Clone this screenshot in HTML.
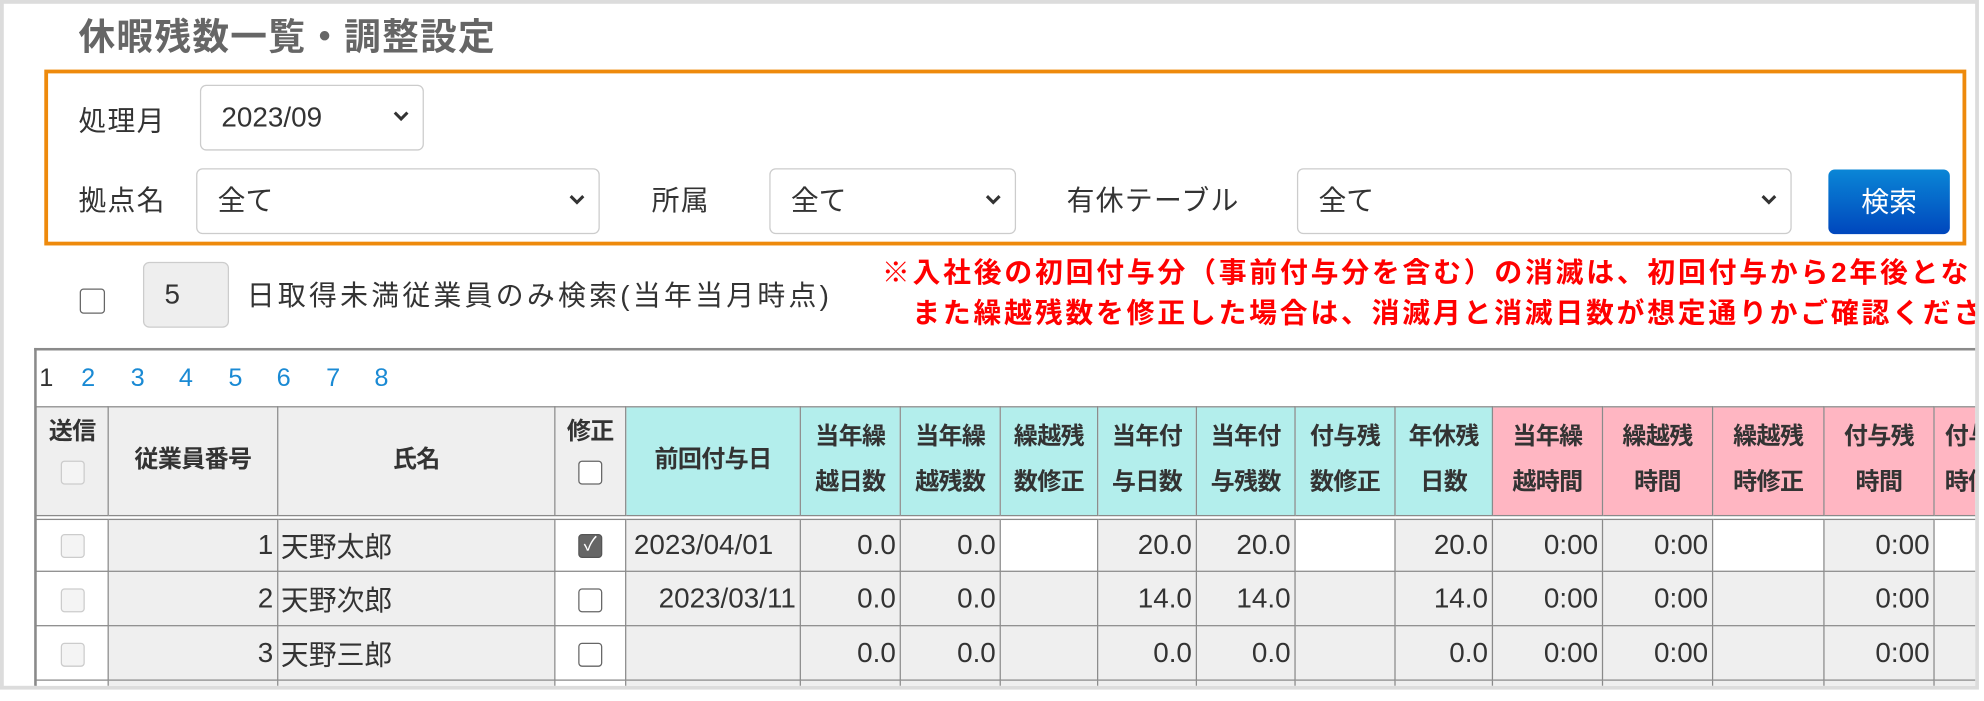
<!DOCTYPE html>
<html><head><meta charset="utf-8"><style>
*{box-sizing:border-box;margin:0;padding:0}
body{width:1984px;height:701px;overflow:hidden;background:#fff;font-family:"Liberation Sans","Noto Sans CJK JP",sans-serif;color:#333}
#w{position:absolute;left:0;top:0;width:1568px;height:554px;transform:scale(1.26531);transform-origin:0 0}
.a{position:absolute}
#frame{left:0;top:0;width:1564px;height:545px;border:3px solid #dcdcdc;overflow:hidden;background:#fff}
.lbl{font-size:22px;color:#333;line-height:26px;letter-spacing:1px}
.sel{border:1px solid #ccc;border-radius:5px;background:#fff;font-size:22px;line-height:49px;padding-left:16px;color:#333}
.sel svg{position:absolute;right:10px;top:19px}
table{border-collapse:collapse;table-layout:fixed;position:absolute;left:25px;top:318px;width:1560px}
td,th{border:1.5px solid #8a8a8a;font-size:22px;overflow:hidden;white-space:nowrap}
th{font-size:19px;font-weight:bold;line-height:36px;background:#efefef;color:#333;vertical-align:middle;letter-spacing:-0.5px}
th.c{background:#b3eeec}
th.p{background:#ffb6c2}
thead tr{height:87px}
thead th{border-bottom:4px double #8a8a8a}
tbody tr{height:43px}
td{background:#efefef;text-align:right;padding-right:3px;color:#333}
td.w{background:#fff}
td.l{text-align:left;padding-left:2px}
.cb{display:inline-block;width:19px;height:19px;border:1.5px solid #666;border-radius:3px;background:#fff;vertical-align:middle}
.cbd{border-color:#ccc;background:#f4f4f4}
.red{font-size:22px;font-weight:bold;color:#f00;line-height:26px;white-space:nowrap;letter-spacing:2.2px}
</style></head><body><div id="w">
<div id="frame" class="a">
<div class="a" style="left:59px;top:10px;font-size:29px;font-weight:bold;color:#666;line-height:34px;letter-spacing:1px">休暇残数一覧・調整設定</div>
<div class="a" style="left:32px;top:52px;width:1519px;height:139px;border:3px solid #ee8a0c"></div>
<div class="a lbl" style="left:59px;top:80px">処理月</div>
<div class="a sel" style="left:155px;top:64px;width:177px;height:52px">2023/09<svg width="14" height="10" viewBox="0 0 14 10"><path d="M2 2l5 5 5-5" fill="none" stroke="#333" stroke-width="2.4"/></svg></div>
<div class="a lbl" style="left:59px;top:143px">拠点名</div>
<div class="a sel" style="left:152px;top:130px;width:319px;height:52px">全て<svg width="14" height="10" viewBox="0 0 14 10"><path d="M2 2l5 5 5-5" fill="none" stroke="#333" stroke-width="2.4"/></svg></div>
<div class="a lbl" style="left:512px;top:143px">所属</div>
<div class="a sel" style="left:605px;top:130px;width:195px;height:52px">全て<svg width="14" height="10" viewBox="0 0 14 10"><path d="M2 2l5 5 5-5" fill="none" stroke="#333" stroke-width="2.4"/></svg></div>
<div class="a lbl" style="left:840px;top:143px">有休テーブル</div>
<div class="a sel" style="left:1022px;top:130px;width:391px;height:52px">全て<svg width="14" height="10" viewBox="0 0 14 10"><path d="M2 2l5 5 5-5" fill="none" stroke="#333" stroke-width="2.4"/></svg></div>
<div class="a" style="left:1442px;top:131px;width:96px;height:51px;border-radius:5px;background:linear-gradient(#0a86d6,#0047bd);color:#fff;font-size:22px;line-height:51px;text-align:center">検索</div>
<div class="a cb" style="left:60px;top:225px;width:20px;height:20px"></div>
<div class="a" style="left:110px;top:204px;width:68px;height:52px;background:#eee;border:1px solid #ccc;border-radius:5px;font-size:22px;line-height:50px;padding-left:16px">5</div>
<div class="a lbl" style="left:192px;top:218px;letter-spacing:2.6px">日取得未満従業員のみ検索(当年当月時点)</div>
<div class="a red" style="left:694px;top:200px">※入社後の初回付与分（事前付与分を含む）の消滅は、初回付与から2年後となります。</div>
<div class="a red" style="left:718px;top:232px">また繰越残数を修正した場合は、消滅月と消滅日数が想定通りかご確認ください。</div>
<div class="a" style="left:24px;top:272px;width:1600px;height:1.5px;background:#8a8a8a"></div>
<div class="a" style="left:24px;top:272px;width:1.5px;height:280px;background:#8a8a8a"></div>
<div class="a" style="left:28px;top:283px;font-size:20px;line-height:26px"><span style="color:#333">1</span><span style="color:#1a8ad4;margin-left:22px">2</span><span style="color:#1a8ad4;margin-left:28px">3</span><span style="color:#1a8ad4;margin-left:27px">4</span><span style="color:#1a8ad4;margin-left:28px">5</span><span style="color:#1a8ad4;margin-left:27px">6</span><span style="color:#1a8ad4;margin-left:28px">7</span><span style="color:#1a8ad4;margin-left:27px">8</span></div>
<table>
<colgroup><col style="width:57px"><col style="width:134px"><col style="width:219px"><col style="width:56px"><col style="width:138px"><col style="width:79px"><col style="width:79px"><col style="width:77px"><col style="width:78px"><col style="width:78px"><col style="width:79px"><col style="width:77px"><col style="width:87px"><col style="width:87px"><col style="width:88px"><col style="width:87px"><col style="width:60px"></colgroup>
<thead><tr>
<th style="vertical-align:top;line-height:32px;padding-top:4px">送信<br><span class="cb cbd"></span></th>
<th>従業員番号</th><th>氏名</th>
<th style="vertical-align:top;line-height:32px;padding-top:4px">修正<br><span class="cb"></span></th>
<th class="c">前回付与日</th><th class="c">当年繰<br>越日数</th><th class="c">当年繰<br>越残数</th><th class="c">繰越残<br>数修正</th><th class="c">当年付<br>与日数</th><th class="c">当年付<br>与残数</th><th class="c">付与残<br>数修正</th><th class="c">年休残<br>日数</th>
<th class="p">当年繰<br>越時間</th><th class="p">繰越残<br>時間</th><th class="p">繰越残<br>時修正</th><th class="p">付与残<br>時間</th><th class="p" style="text-align:left;padding-left:8px">付与残<br>時修正</th>
</tr></thead>
<tbody>
<tr><td class="w" style="text-align:center;padding:0"><span class="cb cbd"></span></td><td>1</td><td class="l">天野太郎</td><td class="w" style="text-align:center;padding:0"><span class="cb" style="background:#666;border-color:#555;color:#fff;font-size:15px;line-height:16px;text-align:center">✓</span></td><td class="l" style="padding-left:6px">2023/04/01</td><td>0.0</td><td>0.0</td><td class="w"></td><td>20.0</td><td>20.0</td><td class="w"></td><td>20.0</td><td>0:00</td><td>0:00</td><td class="w"></td><td>0:00</td><td class="w"></td></tr>
<tr><td class="w" style="text-align:center;padding:0"><span class="cb cbd"></span></td><td>2</td><td class="l">天野次郎</td><td class="w" style="text-align:center;padding:0"><span class="cb"></span></td><td>2023/03/11</td><td>0.0</td><td>0.0</td><td></td><td>14.0</td><td>14.0</td><td></td><td>14.0</td><td>0:00</td><td>0:00</td><td></td><td>0:00</td><td></td></tr>
<tr><td class="w" style="text-align:center;padding:0"><span class="cb cbd"></span></td><td>3</td><td class="l">天野三郎</td><td class="w" style="text-align:center;padding:0"><span class="cb"></span></td><td></td><td>0.0</td><td>0.0</td><td></td><td>0.0</td><td>0.0</td><td></td><td>0.0</td><td>0:00</td><td>0:00</td><td></td><td>0:00</td><td></td></tr>
<tr><td class="w"></td><td></td><td></td><td class="w"></td><td></td><td></td><td></td><td></td><td></td><td></td><td></td><td></td><td></td><td></td><td></td><td></td><td></td></tr>
</tbody></table>
</div>
</div></body></html>
